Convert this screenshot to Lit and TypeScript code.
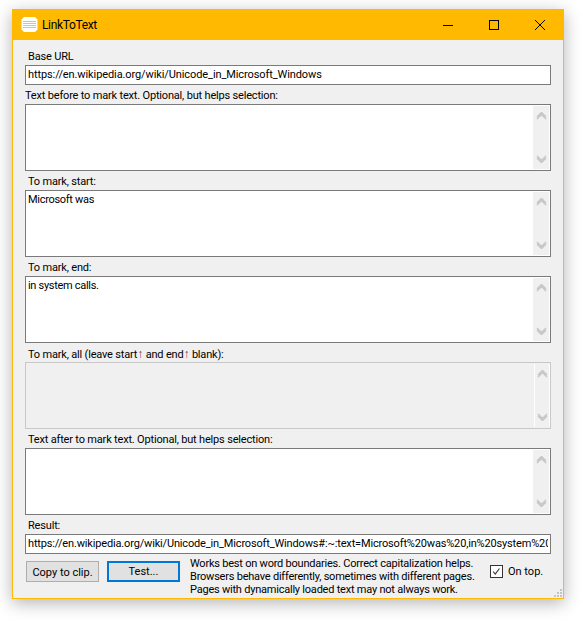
import { LitElement, html, css, svg } from "lit";
import { customElement } from "lit/decorators.js";

const up = svg`<path d="M1 7 L5.5 2.5 L10 7 M1 5 L5.5 0.5 L10 5" fill="none" stroke="currentColor" stroke-width="1.6"/>`;
const down = svg`<path d="M1 1 L5.5 5.5 L10 1 M1 3 L5.5 7.5 L10 3" fill="none" stroke="currentColor" stroke-width="1.6"/>`;

@customElement("app-root")
export class AppRoot extends LitElement {
  static styles = css`
    :host { display: block; width: 583px; height: 622px; box-sizing: border-box; padding: 9px 0 0 12px; background: #fff; font-family: Roboto, "Liberation Sans", Arial, sans-serif; font-size: 11px; color: #000; overflow: hidden; }
    .win { width: 552px; height: 590px; box-sizing: border-box; background: #f0f0f0; border: 1px solid #ffb900; border-top: 0; box-shadow: 0 4px 16px rgba(0,0,0,.3); display: flex; flex-direction: column; position: relative; }
    .title { height: 31px; margin: 0 -1px; background: #ffb900; display: flex; align-items: center; flex: none; }
    .logo { width: 17px; height: 17px; margin-left: 9px; flex: none; }
    .name { margin-left: 4px; font-size: 12px; letter-spacing: -0.35px; flex: 1; }
    .cap { width: 46px; height: 31px; display: flex; align-items: center; justify-content: center; flex: none; }
    .cap.last { margin-right: 1px; }
    .cap svg { display: block; }
    .body { padding: 9px 12px 0 12px; display: flex; flex-direction: column; }
    .lbl { height: 16px; line-height: 16px; padding-left: 3px; white-space: nowrap; letter-spacing: -0.18px; }
    .lbl.tight { padding-left: 0; }
    .lbl i { font-style: normal; color: #8a3a3a; font-size: 12px; }
    .input { height: 20px; box-sizing: border-box; border: 1px solid #7a7a7a; background: #fff; line-height: 18px; padding: 0 2px; width: 526px; margin-bottom: 3px; letter-spacing: -0.1px; }
    .input.result { letter-spacing: -0.16px; }
    .input span { display: block; overflow: hidden; white-space: nowrap; }
    .area { height: 67px; box-sizing: border-box; border: 1px solid #7a7a7a; background: #fff; width: 526px; padding: 1px 0 0 2px; display: flex; justify-content: space-between; margin-bottom: 3px; }
    .area.off { border-color: #c8c8c8; background: #f0f0f0; }
    .txt { line-height: 15px; letter-spacing: -0.3px; }
    .bar { width: 16px; height: 63px; margin-right: 1px; background: #f0f0f0; color: #c8c8c8; display: flex; flex-direction: column; justify-content: space-between; align-items: center; padding: 6px 0; box-sizing: border-box; flex: none; }
    .area.off .bar { border-left: 1px solid #fff; border-right: 1px solid #fff; margin-right: 0; }
    .bar svg { display: block; }
    .foot { display: flex; align-items: flex-start; margin-top: 4px; }
    .btn { width: 73px; height: 21px; box-sizing: border-box; border: 1px solid #adadad; background: #e1e1e1; display: flex; align-items: center; justify-content: center; padding-top: 1px; flex: none; margin-left: 1px; }
    .btn.focus { border: 2px solid #0078d7; margin-left: 8px; padding-top: 0; }
    .note { margin-left: 10px; line-height: 13px; white-space: nowrap; width: 300px; flex: none; margin-top: -4px; letter-spacing: -0.22px; }
    .check { display: flex; align-items: center; gap: 5px; margin-top: 4px; }
    .box { width: 13px; height: 13px; box-sizing: border-box; border: 1px solid #333; background: #fff; display: block; flex: none; }
    .grip { position: absolute; right: 1px; bottom: 1px; width: 9px; height: 9px; }
  `;

  private area(text = "", off = false) {
    return html`<div class="area ${off ? "off" : ""}">
      <div class="txt">${text}</div>
      <div class="bar">
        <svg width="11" height="8" viewBox="0 0 11 8">${up}</svg>
        <svg width="11" height="8" viewBox="0 0 11 8">${down}</svg>
      </div>
    </div>`;
  }

  render() {
    return html`<div class="win">
      <div class="title">
        <svg class="logo" viewBox="0 0 17 17">
          <path d="M3 1h11l2.5 2.5v10L14 16H3L.5 13.5v-10z" fill="#fff"/>
          <path d="M2 5.5h13M2 7.5h13M2 9.5h13M2 11.5h13" stroke="#c9c5b8" stroke-width="1"/>
        </svg>
        <div class="name">LinkToText</div>
        <div class="cap"><svg width="10" height="10" viewBox="0 0 10 10"><path d="M0 5.5H10" stroke="#000"/></svg></div>
        <div class="cap"><svg width="10" height="10" viewBox="0 0 10 10"><rect x=".5" y=".5" width="9" height="9" fill="none" stroke="#000"/></svg></div>
        <div class="cap last"><svg width="10" height="10" viewBox="0 0 10 10"><path d="M0 0L10 10M10 0L0 10" stroke="#000" stroke-width="1"/></svg></div>
      </div>
      <div class="body">
        <div class="lbl">Base URL</div>
        <div class="input"><span>https://en.wikipedia.org/wiki/Unicode_in_Microsoft_Windows</span></div>
        <div class="lbl tight">Text before to mark text. Optional, but helps selection:</div>
        ${this.area()}
        <div class="lbl">To mark, start:</div>
        ${this.area("Microsoft was")}
        <div class="lbl">To mark, end:</div>
        ${this.area("in system calls.")}
        <div class="lbl">To mark, all (leave start<i>↑</i> and end<i>↑</i> blank):</div>
        ${this.area("", true)}
        <div class="lbl">Text after to mark text. Optional, but helps selection:</div>
        ${this.area()}
        <div class="lbl">Result:</div>
        <div class="input result"><span>https://en.wikipedia.org/wiki/Unicode_in_Microsoft_Windows#:~:text=Microsoft%20was%20,in%20system%20calls.</span></div>
        <div class="foot">
          <div class="btn">Copy to clip.</div>
          <div class="btn focus">Test...</div>
          <div class="note">Works best on word boundaries. Correct capitalization helps.<br>Browsers behave differently, sometimes with different pages.<br>Pages with dynamically loaded text may not always work.</div>
          <div class="check">
            <svg class="box" viewBox="0 0 13 13"><path d="M2.5 6.5L5 9.5L10 3" fill="none" stroke="#333" stroke-width="1.3"/></svg>
            <span>On top.</span>
          </div>
        </div>
      </div>
      <svg class="grip" viewBox="0 0 9 9"><path d="M7 1h2v2H7zM4 4h2v2H4zM7 4h2v2H7zM1 7h2v2H1zM4 7h2v2H4zM7 7h2v2H7z" fill="#c4c4c4"/></svg>
    </div>`;
  }
}
